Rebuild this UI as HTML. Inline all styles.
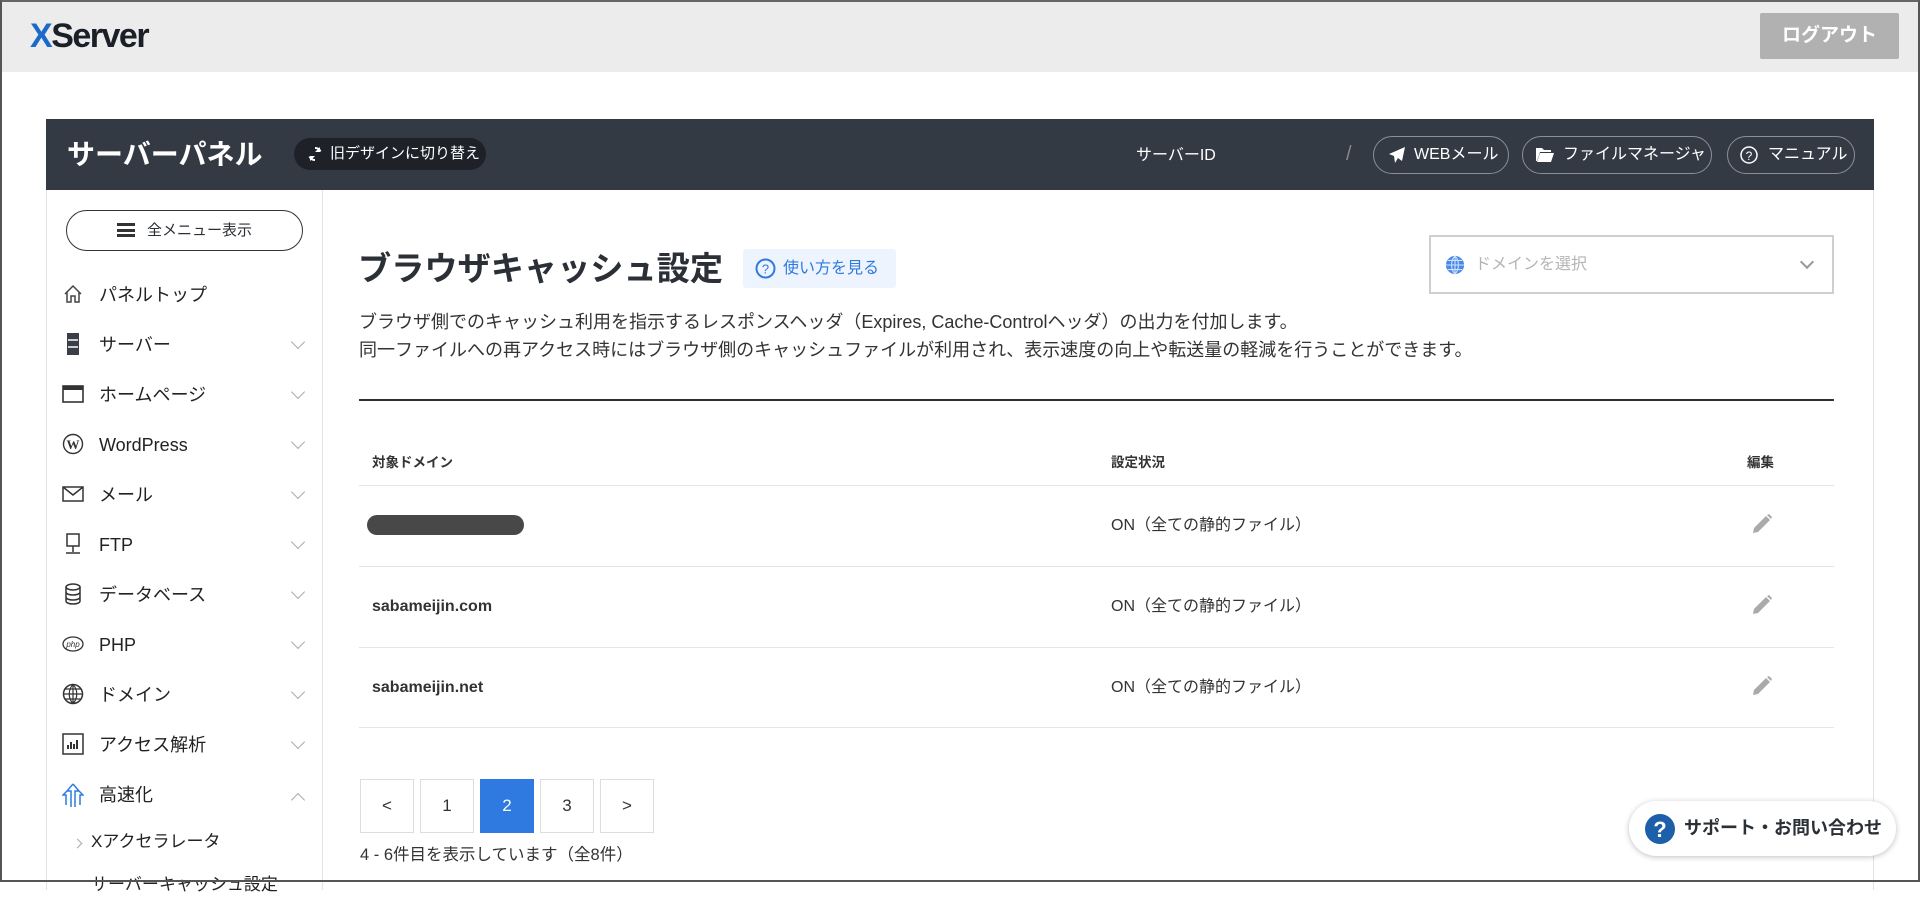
<!DOCTYPE html>
<html><head><meta charset="utf-8"><style>
*{margin:0;padding:0;box-sizing:border-box}
body{width:1920px;height:882px;overflow:hidden;background:#fff;font-family:"Liberation Sans","Noto Sans CJK JP",sans-serif;color:#2b2f36;position:relative}
.a{position:absolute}
.frame{left:0;top:0;width:1920px;height:882px;border:2px solid #555;border-top-color:#666;z-index:50;pointer-events:none}
.top{left:0;top:0;width:1920px;height:72px;background:#ececec}
.logo{left:30px;top:16px;font-size:34px;font-weight:bold;letter-spacing:-1.5px;color:#1b1f27;line-height:40px}
.logout{left:1760px;top:13px;width:139px;height:46px;background:#b1b1b1;color:#fff;font-weight:bold;font-size:19px;text-align:center;line-height:46px;border-radius:2px}
.hdr{left:46px;top:119px;width:1828px;height:71px;background:#343a44}
.hdr .t{left:21px;top:16px;font-size:28px;font-weight:bold;color:#fff;line-height:40px}
.pill{left:248px;top:19px;width:192px;height:32px;background:#1e2127;border-radius:16px;color:#fff;font-size:15px;line-height:32px;padding-left:36px}
.obtn{top:17px;height:38px;border:1px solid #8a8f97;border-radius:19px;color:#fff;font-size:16px;line-height:36px;padding-left:40px}
.side{left:46px;top:190px;width:277px;height:700px;border-left:1px solid #e3e3e3;border-right:1px solid #e3e3e3}
.main-r{left:1873px;top:190px;width:1px;height:700px;background:#e3e3e3}
.allbtn{left:66px;top:210px;width:237px;height:41px;border:1px solid #333;border-radius:21px;font-size:15px;text-align:center;line-height:39px}
.mi{left:99px;font-size:18px;color:#222;line-height:26px}
.ic{left:62px;width:22px;height:22px}
.chev{left:293px;width:10px;height:10px;border-right:1px solid #aaa;border-bottom:1px solid #aaa;transform:rotate(45deg)}
.title{left:358px;top:246px;font-size:33.2px;font-weight:bold;color:#2b2f36;line-height:48px}
.help{left:743px;top:249px;width:153px;height:39px;background:#eef4fd;border-radius:3px;color:#2f7ae0;font-size:16px;line-height:39px;padding-left:40px}
.sel{left:1429px;top:235px;width:405px;height:59px;border:2px solid #cfcfcf;color:#b5b5b5;font-size:16px;line-height:55px;padding-left:44px}
.desc{left:359px;font-size:18px;color:#333;line-height:26px;white-space:nowrap}
.div{left:359px;top:399px;width:1475px;height:2px;background:#2b2f36}
.th{font-size:13.5px;font-weight:bold;top:453px;color:#333;line-height:20px}
.hl{left:359px;width:1475px;height:1px;background:#e2e6ec}
.dom{left:372px;font-size:16px;font-weight:bold;color:#333;line-height:23px}
.st{left:1111px;font-size:16px;color:#333;line-height:23px}
.pg{top:779px;width:54px;height:54px;border:1px solid #ddd;text-align:center;line-height:52px;font-size:17px;color:#333}
.sup{left:1629px;top:801px;width:267px;height:55px;background:#fff;border-radius:28px;box-shadow:0 1px 6px rgba(0,0,0,.25);font-weight:bold;font-size:18px;line-height:55px;padding-left:55px;color:#2b2f36}
</style></head><body>
<div class="a top"></div>
<div class="a logo"><span style="color:#1b6ac9">X</span>Server</div>
<div class="a logout">ログアウト</div>

<div class="a hdr">
 <div class="a t">サーバーパネル</div>
 <div class="a pill"><svg class="a" style="left:13px;top:8px" width="16" height="16" viewBox="0 0 16 16"><path d="M8 2a6 6 0 0 1 5.5 3.5M8 14a6 6 0 0 1-5.5-3.5" stroke="#fff" stroke-width="2" fill="none"/><path d="M13 1v5H8zM3 15v-5h5z" fill="#fff"/></svg>旧デザインに切り替え</div>
 <div class="a" style="left:1090px;top:25px;color:#fff;font-size:16px;line-height:23px">サーバーID</div>
 <div class="a" style="left:1300px;top:22px;color:#888;font-size:20px;line-height:26px">/</div>
 <div class="a obtn" style="left:1327px;width:136px"><svg class="a" style="left:14px;top:9px" width="18" height="18" viewBox="0 0 18 18"><path d="M17 1L1 8l5 2 1 7 3-5 4 3z" fill="#fff"/></svg>WEBメール</div>
 <div class="a obtn" style="left:1476px;width:190px"><svg class="a" style="left:13px;top:10px" width="18" height="15" viewBox="0 0 18 15"><path d="M0 1h6l2 2h7v2H4L1 14H0zM4 6h14l-3 9H1z" fill="#fff"/></svg>ファイルマネージャ</div>
 <div class="a obtn" style="left:1681px;width:128px"><svg class="a" style="left:12px;top:9px" width="18" height="18" viewBox="0 0 18 18"><circle cx="9" cy="9" r="8" stroke="#fff" stroke-width="1.5" fill="none"/><text x="9" y="14" fill="#fff" font-size="12" text-anchor="middle" font-family="Liberation Sans">?</text></svg>マニュアル</div>
</div>

<div class="a side"></div>
<div class="a main-r"></div>
<div class="a allbtn"><span style="display:inline-block;width:18px;height:14px;border-top:3px solid #333;border-bottom:3px solid #333;position:relative;vertical-align:-2px;margin-right:12px"><span style="position:absolute;left:0;top:2.5px;width:18px;height:3px;background:#333"></span></span>全メニュー表示</div>

<svg class="a ic" style="top:283px" viewBox="0 0 22 22"><path d="M3 11L11 3l8 8M5 9v10h4v-6h4v6h4V9" stroke="#444" stroke-width="1.5" fill="none"/></svg>
<div class="a mi" style="top:282px">パネルトップ</div>
<svg class="a ic" style="top:333px" viewBox="0 0 22 22"><rect x="5" y="0" width="12" height="22" fill="#3a3f47"/><path d="M6 7h10M6 14h10" stroke="#fff" stroke-width="1.5"/></svg>
<div class="a mi" style="top:332px">サーバー</div><div class="a chev" style="top:337px"></div>
<svg class="a ic" style="top:383px" viewBox="0 0 22 22"><rect x="1" y="3" width="20" height="16" stroke="#333" stroke-width="1.6" fill="none"/><rect x="1" y="3" width="20" height="4" fill="#333"/></svg>
<div class="a mi" style="top:382px">ホームページ</div><div class="a chev" style="top:387px"></div>
<svg class="a ic" style="top:433px" viewBox="0 0 22 22"><circle cx="11" cy="11" r="9.5" stroke="#333" stroke-width="1.4" fill="none"/><text x="11" y="16" font-size="13" font-weight="bold" text-anchor="middle" font-family="Liberation Serif" fill="#333">W</text></svg>
<div class="a mi" style="top:432px">WordPress</div><div class="a chev" style="top:437px"></div>
<svg class="a ic" style="top:483px" viewBox="0 0 22 22"><rect x="1" y="4" width="20" height="14" stroke="#333" stroke-width="1.5" fill="none"/><path d="M1 4l10 8 10-8" stroke="#333" stroke-width="1.5" fill="none"/></svg>
<div class="a mi" style="top:482px">メール</div><div class="a chev" style="top:487px"></div>
<svg class="a ic" style="top:533px" viewBox="0 0 22 22"><rect x="5" y="1" width="12" height="12" stroke="#333" stroke-width="1.5" fill="none"/><path d="M11 13v6M4 20h14" stroke="#333" stroke-width="1.5"/></svg>
<div class="a mi" style="top:532px">FTP</div><div class="a chev" style="top:537px"></div>
<svg class="a ic" style="top:583px" viewBox="0 0 22 22"><ellipse cx="11" cy="4" rx="7" ry="3" stroke="#333" stroke-width="1.5" fill="none"/><path d="M4 4v14c0 4 14 4 14 0V4M4 9c0 4 14 4 14 0M4 14c0 4 14 4 14 0" stroke="#333" stroke-width="1.5" fill="none"/></svg>
<div class="a mi" style="top:582px">データベース</div><div class="a chev" style="top:587px"></div>
<svg class="a ic" style="top:633px" viewBox="0 0 22 22"><ellipse cx="11" cy="11" rx="10" ry="7" stroke="#333" stroke-width="1.3" fill="none"/><text x="11" y="14" font-size="8" font-style="italic" text-anchor="middle" fill="#333" font-family="Liberation Sans">php</text></svg>
<div class="a mi" style="top:632px">PHP</div><div class="a chev" style="top:637px"></div>
<svg class="a ic" style="top:683px" viewBox="0 0 22 22"><circle cx="11" cy="11" r="9.5" stroke="#333" stroke-width="1.5" fill="none"/><path d="M11 1.5v19M1.5 11h19M3 6h16M3 16h16M11 1.5c-5 5-5 14 0 19M11 1.5c5 5 5 14 0 19" stroke="#333" stroke-width="1.2" fill="none"/></svg>
<div class="a mi" style="top:682px">ドメイン</div><div class="a chev" style="top:687px"></div>
<svg class="a ic" style="top:733px" viewBox="0 0 22 22"><rect x="1" y="1" width="20" height="20" stroke="#333" stroke-width="1.5" fill="none"/><path d="M6 16v-4M9 16v-7M12 16v-5M15 16v-9" stroke="#333" stroke-width="2"/></svg>
<div class="a mi" style="top:732px">アクセス解析</div><div class="a chev" style="top:737px"></div>
<svg class="a ic" style="top:782px;height:26px" viewBox="0 0 22 26"><path d="M11 2L5 9h4v16M11 2l6 7h-4v16M5 9L1 13h3v10M17 9l4 4h-3v10" stroke="#2f7ae0" stroke-width="1.5" fill="none"/></svg>
<div class="a mi" style="top:782px">高速化</div><div class="a chev" style="top:795px;transform:rotate(-135deg)"></div>
<div class="a" style="left:74px;top:840px;width:7px;height:7px;border-right:1px solid #aaa;border-top:1px solid #aaa;transform:rotate(45deg)"></div>
<div class="a" style="left:91px;top:830px;font-size:17px;color:#222;line-height:24px">Xアクセラレータ</div>
<div class="a" style="left:91px;top:873px;font-size:17px;color:#222;line-height:24px">サーバーキャッシュ設定</div>

<div class="a title">ブラウザキャッシュ設定</div>
<div class="a help"><svg class="a" style="left:12px;top:9px" width="21" height="21" viewBox="0 0 21 21"><circle cx="10.5" cy="10.5" r="9" stroke="#2f7ae0" stroke-width="2" fill="none"/><text x="10.5" y="15.5" fill="#2f7ae0" font-size="13" text-anchor="middle" font-family="Liberation Sans">?</text></svg>使い方を見る</div>
<div class="a sel"><svg class="a" style="left:14px;top:18px" width="20" height="20" viewBox="0 0 22 22"><circle cx="11" cy="11" r="10" fill="#4a8ae6"/><path d="M11 1v20M1 11h20M3 6h16M3 16h16M11 1c-5 5-5 15 0 20M11 1c5 5 5 15 0 20" stroke="#cfe0fa" stroke-width="1.2" fill="none"/></svg>ドメインを選択<div class="a" style="right:20px;top:20px;width:10px;height:10px;border-right:2px solid #999;border-bottom:2px solid #999;transform:rotate(45deg)"></div></div>
<div class="a desc" style="top:309px">ブラウザ側でのキャッシュ利用を指示するレスポンスヘッダ（Expires, Cache-Controlヘッダ）の出力を付加します。</div>
<div class="a desc" style="top:337px">同一ファイルへの再アクセス時にはブラウザ側のキャッシュファイルが利用され、表示速度の向上や転送量の軽減を行うことができます。</div>
<div class="a div"></div>

<div class="a th" style="left:372px">対象ドメイン</div>
<div class="a th" style="left:1111px">設定状況</div>
<div class="a th" style="left:1747px">編集</div>
<div class="a hl" style="top:485px"></div>
<div class="a" style="left:367px;top:515px;width:157px;height:20px;background:#484848;border-radius:10px"></div>
<div class="a st" style="top:514px">ON（全ての静的ファイル）</div>
<div class="a hl" style="top:566px"></div>
<div class="a dom" style="top:595px">sabameijin.com</div>
<div class="a st" style="top:595px">ON（全ての静的ファイル）</div>
<div class="a hl" style="top:647px"></div>
<div class="a dom" style="top:676px">sabameijin.net</div>
<div class="a st" style="top:676px">ON（全ての静的ファイル）</div>
<div class="a hl" style="top:727px"></div>
<svg class="a" style="left:1751px;top:513px" width="22" height="22" viewBox="0 0 22 22"><path d="M2 20l1-5L15 3l4 4L7 19z" fill="#aaa"/><path d="M16 2l2-1 3 3-1 2z" fill="#aaa"/></svg>
<svg class="a" style="left:1751px;top:594px" width="22" height="22" viewBox="0 0 22 22"><path d="M2 20l1-5L15 3l4 4L7 19z" fill="#aaa"/><path d="M16 2l2-1 3 3-1 2z" fill="#aaa"/></svg>
<svg class="a" style="left:1751px;top:675px" width="22" height="22" viewBox="0 0 22 22"><path d="M2 20l1-5L15 3l4 4L7 19z" fill="#aaa"/><path d="M16 2l2-1 3 3-1 2z" fill="#aaa"/></svg>

<div class="a pg" style="left:360px">&lt;</div>
<div class="a pg" style="left:420px">1</div>
<div class="a pg" style="left:480px;background:#2f7ae0;border-color:#2f7ae0;color:#fff">2</div>
<div class="a pg" style="left:540px">3</div>
<div class="a pg" style="left:600px">&gt;</div>
<div class="a" style="left:360px;top:843px;font-size:16.5px;color:#333;line-height:24px">4 - 6件目を表示しています（全8件）</div>

<div class="a sup"><svg class="a" style="left:16px;top:13px" width="30" height="30" viewBox="0 0 30 30"><circle cx="15" cy="15" r="15" fill="#1d5fa8"/><text x="15" y="23" fill="#fff" font-size="22" font-weight="bold" text-anchor="middle" font-family="Liberation Sans">?</text></svg>サポート・お問い合わせ</div>
<div class="a frame"></div>
</body></html>
